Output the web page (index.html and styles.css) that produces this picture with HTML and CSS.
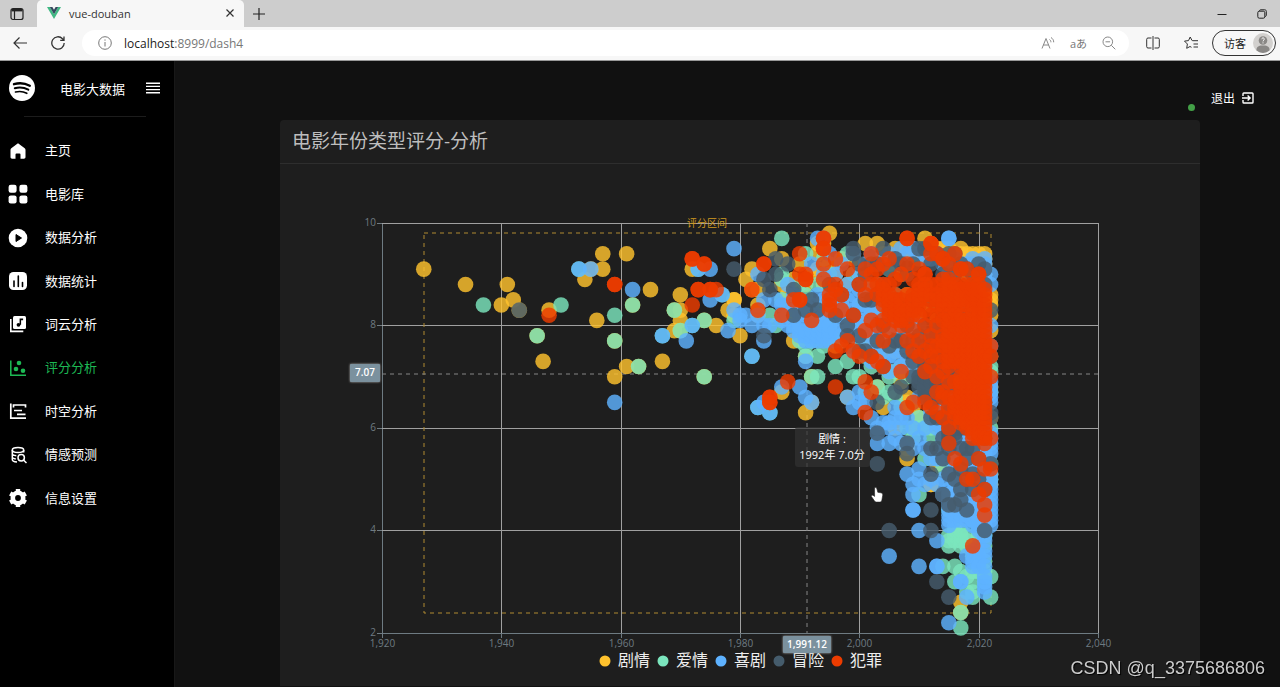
FILE: index.html
```html
<!DOCTYPE html>
<html lang="zh-CN">
<head>
<meta charset="utf-8">
<title>vue-douban</title>
<link rel="stylesheet" href="styles.css">
</head>
<body>
<header class="browser">
  <div class="tabstrip">
    <button class="icon-btn tab-actions" aria-label="Tab actions"><svg width="14" height="14" viewBox="0 0 14 14" fill="none" stroke="#222" stroke-width="1.2"><rect x="1" y="1.5" width="12" height="11" rx="2"/><path d="M1.500 3.200h11" stroke-width="2.400"/><path d="M4.500 4v8"/></svg></button>
    <div class="tab">
      <svg width="14" height="12" viewBox="0 0 14 12"><path d="M0 0h2.800L7 7.200 11.200 0H14L7 12z" fill="#41b883"/><path d="M2.800 0h2.600L7 2.800 8.600 0h2.600L7 7.200z" fill="#35495e"/></svg>
      <span class="tab-title">vue-douban</span>
      <button class="icon-btn" aria-label="Close tab"><svg width="8" height="8" viewBox="0 0 8 8" stroke="#333" stroke-width="1.200"><path d="M.5.5l7 7M7.500.5l-7 7"/></svg></button>
    </div>
    <button class="icon-btn new-tab" aria-label="New tab"><svg width="12" height="12" viewBox="0 0 12 12" stroke="#222" stroke-width="1.200"><path d="M6 0v12M0 6h12"/></svg></button>
    <div class="window-buttons">
      <button class="icon-btn" aria-label="Minimize"><svg width="10" height="10" viewBox="0 0 10 10" stroke="#222"><path d="M.5 5.500h9"/></svg></button>
      <button class="icon-btn" aria-label="Restore"><svg width="10" height="10" viewBox="0 0 10 10" fill="none" stroke="#222"><rect x=".8" y="2.200" width="7" height="7" rx="1.500"/><path d="M2.500 2.200C2.500 1 3 .8 4 .8h3.700c1 0 1.600.6 1.600 1.600V6c0 1-.4 1.500-1.500 1.500"/></svg></button>
    </div>
  </div>
  <div class="toolbar">
    <button class="icon-btn" aria-label="Back"><svg width="14" height="12" viewBox="0 0 14 12" fill="none" stroke="#333" stroke-width="1.200"><path d="M14 6H1M6.500.5L1 6l5.500 5.500"/></svg></button>
    <button class="icon-btn reload" aria-label="Reload"><svg width="14" height="14" viewBox="0 0 14 14" fill="none" stroke="#333" stroke-width="1.300"><path d="M13.200 7A6.200 6.200 0 1 1 11.500 2.700L13 4.200M13 .4v3.900H9.200"/></svg></button>
    <div class="address">
      <svg width="14" height="14" viewBox="0 0 14 14" fill="none" stroke="#777"><circle cx="7" cy="7" r="6.300"/><path d="M7 6v4.500M7 3.400v1.300"/></svg>
      <span class="url">localhost<span class="url-path">:8999/dash4</span></span>
      <div class="address-tools">
        <svg width="14" height="14" viewBox="0 0 14 14" fill="none" stroke="#888"><path d="M1 12.500L5 2.500l4 10M2.300 9h5.400M8.500 3.500c1 .7 1.400 1.500 1.400 2.800M10 1.500c1.800 1.200 2.700 2.600 2.700 4.800"/></svg>
        <span class="translate">aあ</span>
        <svg width="14" height="14" viewBox="0 0 14 14" fill="none" stroke="#888"><circle cx="5.800" cy="5.800" r="4.800"/><path d="M3.500 5.800h4.600M9.300 9.300L13.300 13.300"/></svg>
      </div>
    </div>
    <div class="toolbar-end">
      <svg width="14" height="14" viewBox="0 0 14 14" fill="none" stroke="#333"><path d="M5.500 2H2a1.300 1.300 0 0 0-1.300 1.300v7.400A1.300 1.300 0 0 0 2 12h3.500M8.500 2H12a1.300 1.300 0 0 1 1.300 1.300v7.400A1.300 1.300 0 0 1 12 12H8.500M7 0v14"/></svg>
      <svg width="15" height="14" viewBox="0 0 15 14" fill="none" stroke="#333"><path d="M8.500 4.500H8L6.200 1 4.500 4.600l-4 .5L3.400 8l-.7 4.300L6 10.500l1.500.8M8.500 4.700H14M9.500 8H14M9.500 11H14" stroke-linejoin="round"/></svg>
      <button class="profile">访客<svg width="20" height="20" viewBox="0 0 20 20"><circle cx="10" cy="10" r="10" fill="#d2d0ce"/><path d="M3.500 17.500C3 13 7 12.600 10 12.600s7 .4 6.500 4.900A10 10 0 0 1 3.500 17.500z" fill="#8a8886"/><circle cx="10" cy="7.500" r="4.300" fill="#8a8886"/><path d="M8.800 6.200c0-1.800 2.700-1.600 2.500 0-.1 1-1.300 1-1.300 2.200M10 9.400v1" stroke="#fff" fill="none"/></svg></button>
    </div>
  </div>
</header>
<div class="app">
  <aside class="sidebar">
    <div class="brand">
      <svg width="26" height="26" viewBox="0 0 26 26"><circle cx="13" cy="13" r="13" fill="#fff"/><g fill="none" stroke="#000" stroke-linecap="round"><path d="M5 9.200c5-1.500 11-1 15.800 1.500" stroke-width="2.400"/><path d="M5.800 13.200c4.500-1.200 9.500-.7 13.500 1.500" stroke-width="2"/><path d="M6.500 17c4-.9 8-.5 11.300 1.300" stroke-width="1.600"/></g></svg>
      <span class="brand-name">电影大数据</span>
      <button class="icon-btn" aria-label="折叠菜单"><svg width="14" height="12" viewBox="0 0 14 12" stroke="#fff" stroke-width="1.400"><path d="M0 1.200h14M0 4.400h14M0 7.600h14M0 10.800h14"/></svg></button>
    </div>
    <nav class="menu">
      <a href="#"><svg width="20" height="20" viewBox="0 0 20 20" fill="#fff"><path d="M10 2.200l6.700 5c.6.500.8 1 .8 1.700v7.200c0 1-.6 1.600-1.600 1.600H12.500v-4.200a1 1 0 0 0-1-1h-3a1 1 0 0 0-1 1v4.200H4.100c-1 0-1.600-.6-1.600-1.600V8.900c0-.7.2-1.200.8-1.700z"/></svg>主页</a>
      <a href="#"><svg width="20" height="20" viewBox="0 0 20 20" fill="#fff"><rect x=".6" y=".8" width="8" height="8" rx="2.200"/><rect x="11.400" y=".8" width="8" height="8" rx="2.200"/><rect x=".6" y="11.400" width="8" height="8" rx="2.200"/><rect x="11.400" y="11.400" width="8" height="8" rx="2.200"/></svg>电影库</a>
      <a href="#"><svg width="20" height="20" viewBox="0 0 20 20"><circle cx="10" cy="10" r="9.300" fill="#fff"/><path d="M8 6.500l5.500 3.500L8 13.500z" stroke="#000" stroke-linejoin="round"/></svg>数据分析</a>
      <a href="#"><svg width="20" height="20" viewBox="0 0 20 20"><rect x="1" y="1" width="18" height="18" rx="4.500" fill="#fff"/><path d="M6 10v5.500M10.300 5v10.500M14.500 11.500v4" stroke="#000" stroke-width="1.600" stroke-linecap="round"/></svg>数据统计</a>
      <a href="#"><svg width="20" height="20" viewBox="0 0 20 20"><rect x="5" y="2" width="13" height="13" rx="1.500" fill="#fff"/><path d="M2.800 5v12.400h12.500" fill="none" stroke="#fff" stroke-width="1.600"/><circle cx="10.500" cy="10.800" r="1.900"/><path d="M11.600 10.800V4.500h3.500v1.800h-2v4.500z"/></svg>词云分析</a>
      <a href="#" class="active"><svg width="20" height="20" viewBox="0 0 20 20" fill="#1db954"><path d="M2.800 2.500v14.700H18" fill="none" stroke="#1db954" stroke-width="1.500"/><circle cx="11" cy="5" r="2.300"/><circle cx="8" cy="11" r="2.300"/><circle cx="15" cy="12.700" r="2.300"/></svg>评分分析</a>
      <a href="#"><svg width="20" height="20" viewBox="0 0 20 20" fill="none" stroke="#fff" stroke-width="1.700"><path d="M2.800 2.500v14.700H18M5.500 6.500V4h12v2.500M6 9.500h8M9 13.300h8.500"/></svg>时空分析</a>
      <a href="#"><svg width="20" height="20" viewBox="0 0 20 20" fill="none" stroke="#fff" stroke-width="1.500"><ellipse cx="10" cy="5" rx="5.700" ry="2.500"/><path d="M4.300 5v9.500c0 1.500 2.200 2.300 4.700 2.500M15.700 5v2.500M4.300 8.500c0 1.200 1.800 2 4 2.200M4.300 12c0 1 1.500 1.700 3.500 2"/><circle cx="13.200" cy="12.700" r="3.200"/><path d="M15.500 15l3 3"/></svg>情感预测</a>
      <a href="#"><svg width="20" height="20" viewBox="0 0 20 20" fill="none" stroke="#fff"><circle cx="10" cy="10" r="5.200" stroke-width="4.600"/><path d="M10 1v3M10 16v3M2.200 5.500l2.600 1.500M15.200 13l2.600 1.500M2.200 14.500L4.800 13M15.200 7l2.600-1.500" stroke-width="4.400"/></svg>信息设置</a>
    </nav>
  </aside>
  <main class="content">
    <div class="topbar">
      <span class="status-dot"></span>
      <button class="logout">退出<svg width="12" height="12" viewBox="0 0 12 12" fill="none" stroke="#fff" stroke-width="1.400"><path d="M1 4V1.800Q1 1 1.800 1h8.400q.8 0 .8.800v8.400q0 .8-.8.800H1.800Q1 11 1 10.200V8M0 6h8M5.600 3.500L8.100 6 5.600 8.500"/></svg></button>
    </div>
    <section class="card">
      <h1 class="card-title">电影年份类型评分-分析</h1>
      <svg class="chart" viewBox="0 0 920 522" role="img" aria-label="电影年份类型评分">
        <g id="grid"></g>
        <rect class="mark-area" x="144" y="69" width="567" height="380"/>
        <text class="mark-label" x="427" y="63">评分区间</text>
        <path class="pointer" d="M102 210H818M527 59V469"/>
        <g id="series"></g>
        <rect class="axis-tag" x="70" y="200" width="30" height="18" rx="1"/>
        <text class="axis-tag-text" x="85" y="212">7.07</text>
        <g id="legend"></g>
        <rect class="axis-tag" x="503" y="472" width="48" height="17" rx="1"/>
        <text class="axis-tag-text" x="527" y="484">1,991.12</text>
        <rect class="tip" x="515" y="263" width="75" height="40" rx="3"/>
        <text class="tip-text" x="552" y="279">剧情 :</text>
        <text class="tip-text" x="552" y="295">1992年 7.0分</text>
        <path d="M594.500 324c1-.9 2.100-.3 2.400.8l.9 3.500 3.200.5c1.500.4 1.900 1.200 1.700 2.600l-.8 4.700c-.3 1.400-1 2-2.300 2h-3c-1 0-1.700-.5-2.200-1.300l-3-4.300c-.3-1 .8-1.800 1.800-1.100l1.400 1z" fill="#fff" stroke="#222" stroke-width=".6"/>
      </svg>
    </section>
  </main>
</div>
<div class="watermark">CSDN @q_3375686806</div>
<script src="chart.js"></script>
</body>
</html>
```
FILE: chart.js
```js
// Ratings are stored in tenths; "70-90" is every tenth in the range.
const series = [
  { name: '剧情', color: '#ffc22d', data: {
    1927: '91', 1934: '88', 1940: '84', 1941: '88', 1942: '85', 1943: '83', 1946: '78', 1947: '73', 1948: '83', 1954: '89', 1955: '91',
    1956: '81', 1957: '94 91', 1959: '77 70', 1961: '94 72', 1962: '84', 1963: '72', 1965: '87', 1967: '73', 1969: '83 79',
    1970: '86 83 81 79', 1972: '91', 1974: '81 70', 1976: '80', 1978: '83', 1979: '85 85 82', 1980: '78', 1981: '89', 1982: '91 87', 1983: '87 84 82',
    1985: '95', 1987: '93 88 67', 1988: '86 82', 1989: '77 89', 1990: '92 84', 1991: '88 74 63', 1992: '90 79 70 65', 1993: '96 94 91', 1994: '96 95 88 80',
    1995: '98 92 85 78', 1996: '90 86 76', 1997: '93 84 78', 1998: '88 79 66', 1999: '93 82', 2000: '90 81 75', 2001: '96 88 78', 2002: '92 84 77', 2003: '96 87 80 68',
    2004: '94 83 75 64', 2005: '92 81 71', 2006: '95 85 75 60', 2007: '90 80 69', 2008: '95 86 76 66 65 57 56 54', 2009: '94 84 73 65 64 60', 2010: '93 82 72 62',
    2011: '97 85 70', 2012: '96 84 64 49 49', 2013: '95 81 62 53', 2014: '95 75 60', 2015: '95 90 70', 2016: '94 92-90 53', 2017: '95-91 26 24', 2018: '94-90',
    2019: '94-90', 2020: '94-90', 2021: '94-88', 2022: '86 85 84 82 79 74 68 62 51 49' } },
  { name: '爱情', color: '#7be5bd', data: {
    1937: '84', 1946: '78', 1950: '84', 1953: '91', 1959: '82 77', 1962: '84', 1963: '72', 1967: '78', 1969: '83', 1970: '79', 1972: '80', 1973: '91',
    1974: '81 70', 1977: '86', 1979: '81', 1982: '74', 1983: '64', 1985: '63 82', 1986: '80', 1987: '97 90 89 85', 1989: '82', 1990: '88 77', 1991: '94 86 76 74',
    1992: '81 77 70', 1993: '88 74 70', 1994: '93 84 76', 1995: '90 80', 1996: '86 77 72', 1997: '85 77', 1998: '94 82 73', 1999: '90 79 70', 2000: '84 77 70', 2001: '88 80 74 67', 2002: '92 83 72',
    2003: '88 75 68', 2004: '80 72 66', 2005: '91 77 70 67', 2006: '86 76 71 66', 2007: '80 72 64', 2008: '84 76 70 60', 2009: '80 72 65 58', 2010: '78 70 62 60 47', 2011: '76 68 60 54',
    2012: '73 66 60 58', 2013: '72 62 54', 2014: '70 60 52 33', 2015: '74 60 44 39-37', 2016: '66 52 41-38 33 30', 2017: '58 48-44 40-37 32 24 21', 2018: '60 50-46 39-37 31 28',
    2019: '60 46-42 35 32 30 28 27', 2020: '56 40-38 35 32', 2021: '60 50 39 37 34 32 30', 2022: '72 71 67 60 53 50 31 27' } },
  { name: '喜剧', color: '#5eb2ff', data: {
    1953: '91', 1955: '91', 1959: '65', 1962: '87', 1967: '78', 1971: '77', 1972: '80', 1973: '91', 1975: '91 85', 1977: '86', 1978: '79', 1979: '95 83',
    1980: '82 81', 1981: '82', 1982: '74 80', 1983: '90 82 64', 1984: '85 77 80 65', 1985: '80 63', 1986: '85', 1987: '84 82 81 68', 1988: '88 84 80', 1989: '86 83 80 79', 1990: '85 82 80-78 68',
    1991: '84 82 79-77 73 66', 1992: '92 84 81-77 65', 1993: '97 86 82-77', 1994: '97 90 85 82-77', 1995: '94 86 83 80-77', 1996: '90 84-82 79', 1997: '92 84 82 80 78', 1998: '88 85 82 79 66', 1999: '94 86 83 80 78 75 64',
    2000: '90 87 84 82 80 78 67 65', 2001: '92 87 84 81 79 76 65', 2002: '94 85 83 80 78 75 73 62', 2003: '92 86 83 80 78 75 73 60 59 57', 2004: '93 85 81 79 76 73 61', 2005: '94 82 80 77 74 71 61 60 57 35', 2006: '93 83 80 77 74 64 62 58', 2007: '95 81 78 75 72 62 60 57', 2008: '94 82 79 76 73 62 57 51',
    2009: '95 80 77 74 71 60 56 49 47 44 44', 2010: '94 80 77 74 70 66 58 52 50 40 33', 2011: '93 78 75 72 68 60 56 49', 2012: '93 78 75 72-62 54 50', 2013: '94 75 72 69-60 54 49 38 33 33', 2014: '92 72-54 50 47', 2015: '97 97 90-78 66-56 51 48-41 22',
    2016: '93 86-42', 2017: '92 84-42 30 30', 2018: '92 82-42 35 27', 2019: '93 92 78-41 36 34 33', 2020: '92 78-40 37 35 34 33', 2021: '93-90 80-38 36 35 33 31-28', 2022: '90 88 80 76 69-65 59-55 51-41' } },
  { name: '冒险', color: '#455c6c', data: {
    1943: '83', 1979: '91', 1984: '89 78', 1985: '87', 1986: '93 90', 1988: '92', 1989: '87 82', 1991: '83', 1992: '85', 1993: '83', 1995: '88', 1996: '82', 1997: '86', 1998: '80 78',
    1999: '95 94 82', 2000: '92 88 78 75', 2001: '90 85 75', 2002: '92 85 74', 2003: '92 86 77 65 59 53', 2004: '95 88 80 72', 2005: '91 84 76 40', 2006: '93 85 77 67', 2007: '92 84 77 68',
    2008: '90 83 80 75 57 55', 2009: '92 85 77 73 70', 2010: '95 86 78 74 70-68', 2011: '95 88 80 76-66', 2012: '92 85 78-69 65 62 56 51 44 40', 2013: '94 85 80-66 62 56 30', 2014: '90 84-66 62 58 54 47', 2015: '94 92 84-70 64-56 51 45 27',
    2016: '94 90 82-68 62-58 50 45', 2017: '92 80-60 56 52 48 46', 2018: '91 82-60 56 54 50 44', 2019: '90 80 70-60 56 51 48', 2020: '92 80 66 60 54 50', 2021: '91 88 75 65 58 48 40', 2022: '83 74 63 62 53' } },
  { name: '犯罪', color: '#ed3c00', data: {
    1948: '82', 1959: '88 88', 1972: '93 93 84', 1973: '87 87', 1974: '92 92', 1975: '87 87', 1976: '87', 1982: '87', 1983: '83', 1984: '92 92', 1985: '66 66 65 65', 1987: '82', 1988: '69', 1989: '85',
    1990: '94 90 85 85', 1991: '90 89 89', 1992: '81', 1994: '97 97 95 95 92 89', 1995: '86 84 85 83', 1996: '93 88 87 75 68', 1997: '86 83 76', 1998: '91 77', 1999: '82 75', 2000: '88 74',
    2001: '91 86 79 69 63', 2002: '94 90 88 81 74 67', 2003: '91 88 86 80 73', 2004: '92 88-84 81 77 72', 2005: '93 88 86-82 79', 2006: '89 86-81', 2007: '90 85-80 71', 2008: '97 97 92 86 83 81 77 64', 2009: '89 86-82 79 75 65', 2010: '91 88-84 82 77 74',
    2011: '90 90 88-86 83 80 75 71 65', 2012: '96 96 94 88 86 85 82 78 76 74 72 64', 2013: '94 88 86-84 82 80 76 74 70 67 63', 2014: '93 93 89 87-83 81 78-76 73 71 67 66 62', 2015: '92 89-84 82-78 76-72 69 66 64 60 57', 2016: '94 88-82 80-73 69 66-62 54',
    2017: '91 91 88-84 82-72 70-61 53', 2018: '91 88-84 81-60 50', 2019: '88-71 69-58 50 37', 2020: '90 90 88-58 54 47', 2021: '87-57 52 48 45 43', 2022: '76 74 70 58 52' } }
];

const plot = { x: 102, y: 59, w: 716, h: 410, minYear: 1920, maxYear: 2040, min: 2, max: 10 };
const xOf = year => plot.x + (year - plot.minYear) / (plot.maxYear - plot.minYear) * plot.w;
const yOf = rating => plot.y + (plot.max - rating) / (plot.max - plot.min) * plot.h;

function add(parent, tag, attrs, text) {
  const node = document.createElementNS('http://www.w3.org/2000/svg', tag);
  Object.entries(attrs).forEach(([key, value]) => node.setAttribute(key, value));
  if (text) node.textContent = text;
  parent.append(node);
  return node;
}

function expand(spec) {
  return spec.split(' ').flatMap(part => {
    const ends = part.split('-').map(Number);
    if (ends.length === 1) return ends;
    const low = Math.min(...ends);
    return Array.from({ length: Math.abs(ends[1] - ends[0]) + 1 }, (_, i) => low + i);
  });
}

const grid = document.getElementById('grid');
for (let year = 1920; year <= 2040; year += 20) {
  const x = Math.round(xOf(year)) + 0.5;
  add(grid, 'path', { class: year === 1920 ? 'axis' : 'gridline', d: `M${x} ${plot.y}V${plot.y + plot.h}` });
  add(grid, 'path', { class: 'axis', d: `M${x} ${plot.y + plot.h}v5` });
  add(grid, 'text', { class: 'tick', x, y: plot.y + plot.h + 14, 'text-anchor': 'middle' }, year.toLocaleString('en-US'));
}
for (let rating = 2; rating <= 10; rating += 2) {
  const y = Math.floor(yOf(rating)) + 0.5;
  add(grid, 'path', { class: rating === 2 ? 'axis' : 'gridline', d: `M${plot.x} ${y}h${plot.w}` });
  add(grid, 'path', { class: 'axis', d: `M${plot.x - 5} ${y}h5` });
  add(grid, 'text', { class: 'tick', x: plot.x - 6, y: y + 2, 'text-anchor': 'end' }, String(rating));
}

const layer = document.getElementById('series');
series.forEach(({ color, data }) => {
  const group = add(layer, 'g', { fill: color, 'fill-opacity': 0.82 });
  Object.entries(data).forEach(([year, spec]) => {
    expand(spec).forEach(value => add(group, 'circle', { cx: xOf(Number(year)), cy: yOf(value / 10), r: 7.8 }));
  });
});

const legend = document.getElementById('legend');
series.forEach(({ name, color }, i) => {
  add(legend, 'circle', { cx: 325 + i * 58, cy: 497, r: 5.5, fill: color });
  add(legend, 'text', { class: 'legend-text', x: 338 + i * 58, y: 502 }, name);
});
```
FILE: styles.css
```css
* { box-sizing: border-box; }
body {
  margin: 0;
  height: 100vh;
  display: flex;
  flex-direction: column;
  overflow: hidden;
  background: #111;
  font-family: "Open Sans", "Noto Sans CJK SC", sans-serif;
  font-size: 13px;
  color: #fff;
}
svg { flex: none; }
button { font: inherit; color: inherit; border: 0; padding: 0; background: none; }
.icon-btn { display: flex; align-items: center; }

.browser { background: #f7f7f7; border-bottom: 1px solid #999; color: #333; }
.tabstrip { display: flex; align-items: center; height: 27px; background: #cdcdcd; padding-right: 13px; }
.tab-actions { padding: 0 13px 0 10px; }
.tab {
  display: flex;
  align-items: center;
  gap: 8px;
  width: 207px;
  height: 27px;
  padding: 0 10px 1px;
  background: #f7f7f7;
  border-radius: 5px 5px 0 0;
}
.tab-title { flex: 1; font-size: 11px; }
.new-tab { margin-left: 9px; }
.window-buttons { display: flex; gap: 30px; margin-left: auto; }
.toolbar { display: flex; align-items: center; height: 33px; padding: 0 4px 1px 13px; }
.reload { margin: 0 17px 0 24px; }
.address {
  flex: 1;
  display: flex;
  align-items: center;
  gap: 12px;
  height: 26px;
  padding: 0 13px 0 16px;
  background: #fff;
  border-radius: 13px;
}
.url { font-size: 12px; color: #222; }
.url-path { color: #777; }
.address-tools { display: flex; align-items: center; gap: 15px; margin-left: auto; color: #777; }
.translate { font-size: 11px; }
.toolbar-end { display: flex; align-items: center; gap: 24px; margin-left: 17px; }
.profile {
  display: flex;
  align-items: center;
  gap: 7px;
  height: 26px;
  margin-left: -11px;
  padding: 0 2px 0 11px;
  border: 1px solid #333;
  border-radius: 13px;
  font-size: 11px;
  color: #222;
}

.app { flex: 1; display: flex; min-height: 0; }
.sidebar { width: 175px; flex: none; background: #000; border-right: 1px solid #181818; }
.brand { display: flex; align-items: center; height: 55px; padding: 0 0 1px 9px; }
.brand-name { width: 86px; margin-left: 25px; }
.menu {
  display: grid;
  grid-auto-rows: 1fr;
  min-height: 391px;
  margin-top: 12px;
  position: relative;
}
.menu::before { content: ""; position: absolute; top: -12px; left: 24px; right: 28px; border-top: 1px solid #1c1c1c; }
.menu a { display: flex; align-items: center; gap: 17px; padding-left: 8px; color: #fff; text-decoration: none; }
.menu svg { margin-top: 2px; }
.menu a.active { color: #1db954; }

.content { flex: 1; min-width: 0; }
.topbar { display: flex; align-items: flex-start; justify-content: flex-end; gap: 16px; height: 59px; padding: 28px 26px 0 0; }
.status-dot { width: 7px; height: 7px; margin-top: 15px; border-radius: 50%; background: #43a047; }
.logout { display: flex; align-items: center; gap: 7px; font-size: 12px; }
.card { margin: 0 80px 0 105px; background: #1e1e1e; border-radius: 4px 4px 0 0; }
.card-title {
  margin: 0;
  height: 44px;
  padding-left: 12px;
  border-bottom: 1px solid #2e2e2e;
  font-size: 19px;
  font-weight: 400;
  line-height: 42px;
  color: #bdbdbd;
}
.chart { display: block; width: 100%; }
.gridline { stroke: #a0a0a0; }
.axis { stroke: #6e7b82; }
.tick { fill: #6e7b82; font-size: 10px; }
.mark-area { fill: none; stroke: #b08a30; stroke-dasharray: 4 4; }
.mark-label { fill: #d09a20; font-size: 10px; text-anchor: middle; }
.pointer { stroke: #858585; stroke-dasharray: 4 4; fill: none; }
.axis-tag { fill: #7b919e; filter: drop-shadow(0 0 1px #aaa); }
.axis-tag-text { fill: #fff; font-size: 10px; font-weight: 600; text-anchor: middle; }
.tip { fill: #323232; fill-opacity: 0.7; }
.tip-text { fill: #fff; font-size: 11px; text-anchor: middle; }
.legend-text { fill: #eee; font-size: 16px; }
.watermark {
  position: fixed;
  right: 15px;
  bottom: 7px;
  font-family: "Liberation Sans", Arial, sans-serif;
  font-size: 18px;
  line-height: 24px;
  color: #ccc;
  text-shadow: 1px 1px 1px #000;
}
```
